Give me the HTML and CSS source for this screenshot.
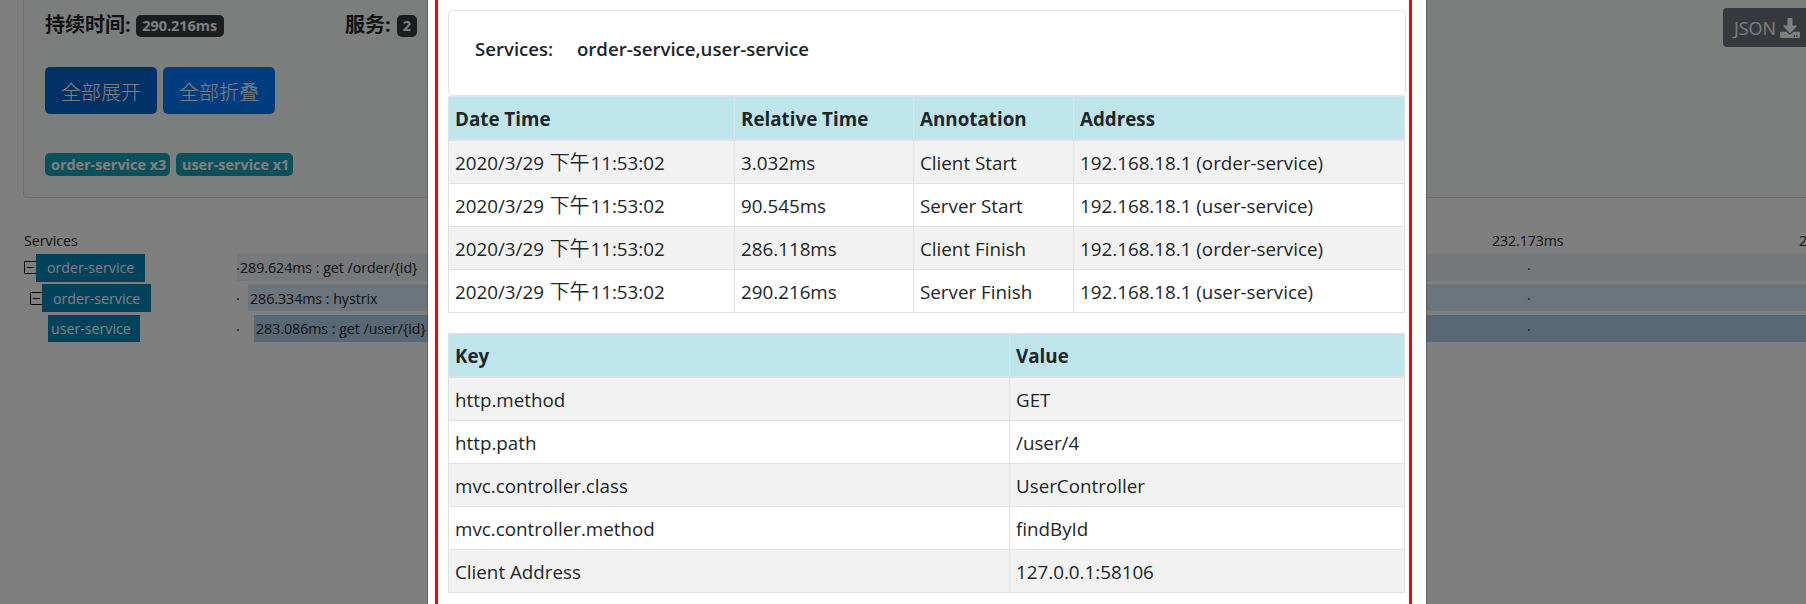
FILE: index.html
```html
<!DOCTYPE html>
<html lang="zh">
<head>
<meta charset="utf-8">
<title>Zipkin</title>
<link rel="stylesheet" href="styles.css">
</head>
<body>
<div class="page">
  <section class="card">
    <div class="summary">
      <div class="stat">持续时间: <span class="badge dark duration">290.216ms</span></div>
      <div class="stat count">服务: <span class="badge dark">2</span></div>
    </div>
    <div class="buttons"><button class="btn active">全部展开</button><button class="btn">全部折叠</button></div>
    <div class="tags"><span class="badge info order">order-service x3</span><span class="badge info user">user-service x1</span></div>
    <button class="json"><span>JSON</span>
      <svg width="20" height="20" viewBox="0 0 512 512"><path fill="#fff" d="M216 0h80c13 0 24 11 24 24v168h88c18 0 27 21 14 34L270 378c-7 7-20 7-28 0L90 226c-12-13-3-34 14-34h88V24c0-13 11-24 24-24zm296 376v112c0 13-11 24-24 24H24c-13 0-24-11-24-24V376c0-13 11-24 24-24h147l49 49c20 20 52 20 72 0l49-49h147c13 0 24 11 24 24zM388 464a20 20 0 1 0-40 0 20 20 0 0 0 40 0zm64 0a20 20 0 1 0-40 0 20 20 0 0 0 40 0z"/></svg>
    </button>
  </section>
  <section class="timeline">
    <div class="row head"><span class="label">Services</span><span class="tick">232.173ms</span><span class="last">2</span></div>
    <div class="row"><span class="label"><i class="toggle"></i><b class="svc">order-service</b></span><div class="track"><span class="dot">·</span><div class="bar b1">289.624ms : get /order/{id}</div><span class="dot far">·</span></div></div>
    <div class="row second"><span class="label"><i class="toggle"></i><b class="svc">order-service</b></span><div class="track"><span class="dot">·</span><div class="bar b2">286.334ms : hystrix</div><span class="dot far">·</span></div></div>
    <div class="row third"><span class="label"><b class="svc leaf">user-service</b></span><div class="track"><span class="dot">·</span><div class="bar b3">283.086ms : get /user/{id}</div><span class="dot far">·</span></div></div>
  </section>
</div>
<div class="overlay">
  <div class="modal">
    <div class="frame">
      <div class="services"><span class="name">Services:</span><span>order-service,user-service</span></div>
      <table class="annotations">
        <colgroup><col class="c1"><col class="c2"><col class="c3"><col></colgroup>
        <thead><tr><th>Date Time</th><th>Relative Time</th><th>Annotation</th><th>Address</th></tr></thead>
        <tbody>
          <tr><td>2020/3/29 <span class="cjk">下午</span>11:53:02</td><td>3.032ms</td><td>Client Start</td><td>192.168.18.1 (order-service)</td></tr>
          <tr><td>2020/3/29 <span class="cjk">下午</span>11:53:02</td><td>90.545ms</td><td>Server Start</td><td>192.168.18.1 (user-service)</td></tr>
          <tr><td>2020/3/29 <span class="cjk">下午</span>11:53:02</td><td>286.118ms</td><td>Client Finish</td><td>192.168.18.1 (order-service)</td></tr>
          <tr><td>2020/3/29 <span class="cjk">下午</span>11:53:02</td><td>290.216ms</td><td>Server Finish</td><td>192.168.18.1 (user-service)</td></tr>
        </tbody>
      </table>
      <table class="tagtable">
        <colgroup><col class="k"><col></colgroup>
        <thead><tr><th>Key</th><th>Value</th></tr></thead>
        <tbody>
          <tr><td>http.method</td><td>GET</td></tr>
          <tr><td>http.path</td><td>/user/4</td></tr>
          <tr><td>mvc.controller.class</td><td>UserController</td></tr>
          <tr><td>mvc.controller.method</td><td>findById</td></tr>
          <tr><td>Client Address</td><td>127.0.0.1:58106</td></tr>
        </tbody>
      </table>
    </div>
  </div>
</div>
</body>
</html>
```
FILE: styles.css
```css
* { box-sizing: border-box; }
html, body { height: 100%; }
body {
  margin: 0;
  overflow: hidden;
  background: #fff;
  color: #212529;
  font-family: "Open Sans", "Noto Sans CJK SC", sans-serif;
  font-size: 18.8px;
  line-height: 30px;
}
button { border: 0; margin: 0; font-family: inherit; color: #fff; }

.page { width: 1860px; height: 604px; overflow: hidden; }
.card {
  position: relative;
  height: 198px;
  margin-left: 23px;
  padding: 9px 0 0 21px;
  background: #f8fcfa;
  border: 1px solid #dcdedd;
  border-top: 0;
  border-bottom-left-radius: 5px;
}
.summary { display: flex; height: 58px; font-weight: 700; font-size: 20px; line-height: 31px; }
.stat { display: flex; width: 300px; gap: 5px; white-space: nowrap; }
.count { gap: 6px; }
.badge {
  display: inline-block;
  height: 23px;
  padding: 0 6px;
  border-radius: 5px;
  color: #fff;
  font-size: 14.4px;
  font-weight: 700;
  line-height: 23px;
  text-align: center;
  white-space: nowrap;
}
.dark { margin-top: 6px; height: 22px; background: #343a40; line-height: 22px; }
.duration { width: 88px; }
.info { background: #17a2b8; }
.buttons { display: flex; gap: 6px; height: 86px; }
.btn {
  width: 112px; height: 47px; padding: 2px 0 0;
  border-radius: 5px; background: #007bff;
  font-size: 20px; font-weight: 300; line-height: 47px;
}
.btn.active { background: #0062cc; }
.tags { display: flex; gap: 6px; }
.order { width: 125px; }
.user { width: 117px; }
.json {
  position: absolute; top: 8px; left: 1699px;
  display: flex; align-items: center; gap: 4px;
  width: 110px; height: 39px; padding: 0 11px;
  border-radius: 4px; background: #6c757d; font-size: 17.9px;
}

.timeline { padding: 26px 0 0 23px; font-size: 14.2px; }
.row { display: flex; height: 28px; margin-bottom: 2px; line-height: 27px; }
.row.head { height: 30px; margin: 0; line-height: 34px; }
.second { margin-bottom: 3px; }
.label { display: flex; flex: none; align-items: flex-start; width: 214px; padding-left: 1px; }
.second .label { padding-left: 7px; }
.third .label { padding-left: 25px; }
.tick { flex: none; margin-left: 1255px; width: 307px; letter-spacing: -.1px; }
.toggle { width: 13px; height: 13px; margin: 7px -1px 0 0; border: 1px solid #000; border-radius: 1px; display: grid; place-items: center; }
.toggle::before { content: ""; width: 7px; height: 1px; background: #000; }
.second .toggle { margin-top: 8px; }
.svc { width: 109px; height: 28px; padding-left: 11px; background: #0084b8; color: #fff; font-weight: 400; }
.second .svc { line-height: 29px; }
.leaf { width: 92px; height: 27px; padding-left: 3px; }
.track { position: relative; flex: 1; height: 27px; }
.bar { height: 27px; padding-left: 3px; white-space: nowrap; letter-spacing: -.02px; }
.b1 { background: #ebf2f8; }
.b2 { margin-left: 11px; background: #d8e8f8; line-height: 29px; padding-left: 2px; }
.b3 { margin-left: 17px; background: #b0d0e8; padding-left: 2px; }
.dot { position: absolute; top: 1px; left: -1px; }
.dot.far { left: 1290px; }

.overlay {
  position: absolute; inset: 0;
  display: flex; padding-left: 427px;
  background: rgba(0, 0, 0, .5);
}
.modal {
  width: 1000px; height: 604px; padding: 0 14px 0 7px;
  background: #fff; background-clip: padding-box;
  border: solid rgba(0, 0, 0, .2); border-width: 0 1px;
}
.frame { width: 977px; height: 604px; padding: 10px 0 0 10px; border: solid red; border-width: 0 3px; }
.services {
  display: flex; width: 958px; height: 86px; padding: 23px 0 0 26px;
  border: 1px solid #dee2e6; border-radius: 5px;
  font-size: 18.6px; font-weight: 550;
}
.name { width: 102px; }
table {
  width: 957px; table-layout: fixed;
  border-collapse: separate; border-spacing: 0;
  border: solid #dee2e6; border-width: 1px 0 0 1px;
}
.annotations { margin-bottom: 20px; }
th, td {
  height: 43px; padding: 7px 6px 5px;
  border: solid #dee2e6; border-width: 0 1px 1px 0;
  text-align: left; white-space: nowrap;
}
th { height: 44px; border-bottom-width: 2px; background: #bee5eb; }
tbody tr:nth-child(odd) td { background: #f2f2f2; }
.cjk { font-size: 20px; line-height: 1; margin: 0 .8px; font-weight: 350; }
.c1 { width: 286px; }
.c2 { width: 179px; }
.c3 { width: 160px; }
.k { width: 561px; }
```
